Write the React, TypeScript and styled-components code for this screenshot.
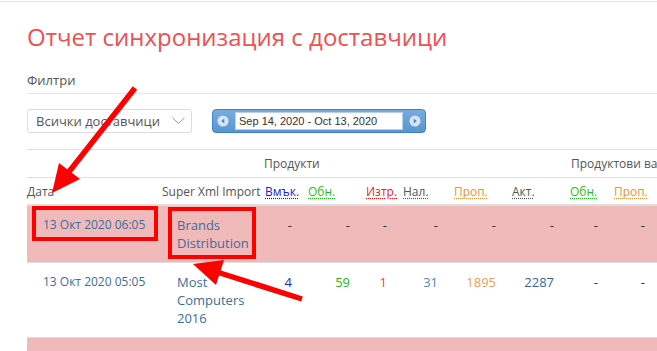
import React from "react";
import styled, { createGlobalStyle } from "styled-components";

const Global = createGlobalStyle`
  html, body { margin: 0; padding: 0; background: #fff; overflow: hidden; }
  body { font-family: "Open Sans", "Noto Sans", sans-serif; }
`;

const Page = styled.div`
  position: relative;
  width: 657px;
  height: 350px;
  margin-top: 1px;
  border-top: 1px solid #e2e2e2;
  padding-left: 27px;
  box-sizing: border-box;
  overflow: hidden;
`;

const Title = styled.h1`
  margin: 0;
  padding-top: 20px;
  font-size: 24px;
  line-height: 30px;
  font-weight: 400;
  color: #f0504f;
  white-space: nowrap;
`;

const SectionHead = styled.div`
  margin-top: 19px;
  padding-bottom: 4px;
  border-bottom: 1px solid #e5e5e5;
  font-size: 13px;
  line-height: 18px;
  color: #555;
`;

const Controls = styled.div`
  display: flex;
  align-items: center;
  gap: 20px;
  margin-top: 15px;
  height: 24px;
`;

const Select = styled.div`
  width: 165px;
  height: 24px;
  box-sizing: border-box;
  border: 1px solid #dcdcdc;
  border-radius: 3px;
  display: flex;
  align-items: center;
  justify-content: space-between;
  padding: 0 6px 0 8px;
  font-size: 13px;
  color: #555;
`;

const DatePicker = styled.div`
  width: 214px;
  height: 24px;
  box-sizing: border-box;
  border: 1px solid #3d82c4;
  border-radius: 4px;
  background: linear-gradient(#79acdf, #5b95d0);
  display: flex;
  align-items: center;
  justify-content: space-between;
  padding: 0 4px;
`;

const DateInput = styled.div`
  width: 168px;
  height: 18px;
  box-sizing: border-box;
  background: #fff;
  border: 1px solid #b8cfe6;
  display: flex;
  align-items: center;
  padding-left: 3px;
  font-family: "Liberation Sans", Arial, sans-serif;
  font-size: 11px;
  color: #333;
  white-space: nowrap;
`;

const Table = styled.table`
  margin-top: 16px;
  border-collapse: collapse;
  table-layout: fixed;
  width: 630px;
  font-size: 12px;
`;

const GroupRow = styled.tr`
  border-top: 1px solid #dedede;
  border-bottom: 1px solid #dedede;
`;

const GroupCell = styled.th<{ $pl: number }>`
  height: 27px;
  padding: 0 0 0 ${(p) => p.$pl}px;
  text-align: left;
  font-weight: 400;
  font-size: 12px;
  color: #555;
  white-space: nowrap;
`;

const HeadRow = styled.tr`
  border-bottom: 2px solid #dedede;
`;

const HeadCell = styled.th<{ $pl: number }>`
  height: 26px;
  padding: 0 0 0 ${(p) => p.$pl}px;
  text-align: left;
  font-weight: 400;
  font-size: 12px;
  color: #555;
  white-space: nowrap;
`;

const Abbr = styled.span<{ $c: string }>`
  color: ${(p) => p.$c};
  text-decoration: underline dotted ${(p) => p.$c};
  text-underline-offset: 2px;
`;

const Row = styled.tr<{ $hl?: boolean }>`
  background: ${(p) => (p.$hl ? "#f0baba" : "#fff")};
  border-bottom: 1px solid #dedede;
`;

const DateCell = styled.td`
  vertical-align: top;
  padding: 10px 0 10px 16px;
  line-height: 18px;
  font-size: 12px;
  color: #3c6d9c;
  white-space: nowrap;
`;

const NameCell = styled.td`
  vertical-align: top;
  padding: 10px 4px 10px 19px;
  line-height: 18px;
  font-size: 13px;
  color: #3c6d9c;
`;

const NumCell = styled.td<{ $c?: string }>`
  vertical-align: top;
  padding: 10px 12px 10px 0;
  line-height: 18px;
  font-size: 13px;
  text-align: right;
  color: ${(p) => p.$c || "#333"};
`;

const EmptyCell = styled.td`
  height: 38px;
`;

const Overlay = styled.svg`
  position: absolute;
  left: 0;
  top: -1px;
  pointer-events: none;
`;

const widths = [131, 103, 43, 58, 37, 51, 58, 58, 44, 47];

const heads: { label: string; c?: string; pl: number }[] = [
  { label: "Дата", pl: 0 },
  { label: "Super Xml Import", pl: 4 },
  { label: "Вмък.", c: "#1a1aee", pl: 4 },
  { label: "Обн.", c: "#1fbf1f", pl: 4 },
  { label: "Изтр.", c: "#f01c1c", pl: 4 },
  { label: "Нал.", c: "#555555", pl: 4 },
  { label: "Проп.", c: "#e8923a", pl: 4 },
  { label: "Акт.", c: "#555555", pl: 4 },
  { label: "Обн.", c: "#1fbf1f", pl: 4 },
  { label: "Проп.", c: "#e8923a", pl: 4 },
];

type Val = { v: string; c?: string };
const dash: Val = { v: "-" };

const rows: { hl: boolean; date: string; name: string; vals: Val[] }[] = [
  {
    hl: true,
    date: "13 Окт 2020 06:05",
    name: "Brands Distribution",
    vals: [dash, dash, dash, dash, dash, dash, dash, dash],
  },
  {
    hl: false,
    date: "13 Окт 2020 05:05",
    name: "Most Computers 2016",
    vals: [
      { v: "4", c: "#2323e6" },
      { v: "59", c: "#22b922" },
      { v: "1", c: "#ff3a3a" },
      { v: "31", c: "#5684b4" },
      { v: "1895", c: "#e8a157" },
      { v: "2287", c: "#33689a" },
      dash,
      dash,
    ],
  },
];

const NavIcon = ({ dir }: { dir: "l" | "r" }) => (
  <svg width="12" height="12" viewBox="0 0 12 12">
    <circle cx="6" cy="6" r="5.5" fill="#d5e5f5" />
    {dir === "l" ? (
      <path d="M7.3 3.4 L4.2 6 L7.3 8.6 Z" fill="#4a87c6" />
    ) : (
      <path d="M4.7 3.4 L7.8 6 L4.7 8.6 Z" fill="#4a87c6" />
    )}
  </svg>
);

export default function App() {
  return (
    <>
      <Global />
      <Page>
        <Title>Отчет синхронизация с доставчици</Title>
        <SectionHead>Филтри</SectionHead>
        <Controls>
          <Select>
            <span>Всички доставчици</span>
            <svg width="13" height="8" viewBox="0 0 13 8">
              <polyline points="0.5,0.8 6.5,6.5 12.5,0.8" fill="none" stroke="#999" strokeWidth="1" />
            </svg>
          </Select>
          <DatePicker>
            <NavIcon dir="l" />
            <DateInput>Sep 14, 2020 - Oct 13, 2020</DateInput>
            <NavIcon dir="r" />
          </DatePicker>
        </Controls>
        <Table>
          <colgroup>
            {widths.map((w, i) => (
              <col key={i} style={{ width: w }} />
            ))}
          </colgroup>
          <thead>
            <GroupRow>
              <GroupCell $pl={0} colSpan={2}></GroupCell>
              <GroupCell $pl={3} colSpan={6}>Продукти</GroupCell>
              <GroupCell $pl={5} colSpan={2}>Продуктови варианти</GroupCell>
            </GroupRow>
            <HeadRow>
              {heads.map((h, i) => (
                <HeadCell key={i} $pl={h.pl}>
                  {h.c ? <Abbr $c={h.c}>{h.label}</Abbr> : h.label}
                </HeadCell>
              ))}
            </HeadRow>
          </thead>
          <tbody>
            {rows.map((r, i) => (
              <Row key={i} $hl={r.hl}>
                <DateCell>{r.date}</DateCell>
                <NameCell>{r.name}</NameCell>
                {r.vals.map((v, j) => (
                  <NumCell key={j} $c={v.c}>
                    {v.v}
                  </NumCell>
                ))}
              </Row>
            ))}
            <Row $hl>
              <EmptyCell colSpan={10} />
            </Row>
          </tbody>
        </Table>
        <Overlay width="657" height="351" viewBox="0 0 657 351">
          <rect x="34" y="207" width="122" height="31" fill="none" stroke="#ff0000" strokeWidth="4" />
          <rect x="170" y="208" width="84" height="48" fill="none" stroke="#ff0000" strokeWidth="4" />
          <line x1="135" y1="87" x2="68" y2="172" stroke="#ff0000" strokeWidth="5.5" />
          <polygon points="52,192 59,162 80,178" fill="#ff0000" />
          <line x1="302" y1="298" x2="217" y2="271" stroke="#ff0000" strokeWidth="5.5" />
          <polygon points="193,263 224,259 216,284" fill="#ff0000" />
        </Overlay>
      </Page>
    </>
  );
}
